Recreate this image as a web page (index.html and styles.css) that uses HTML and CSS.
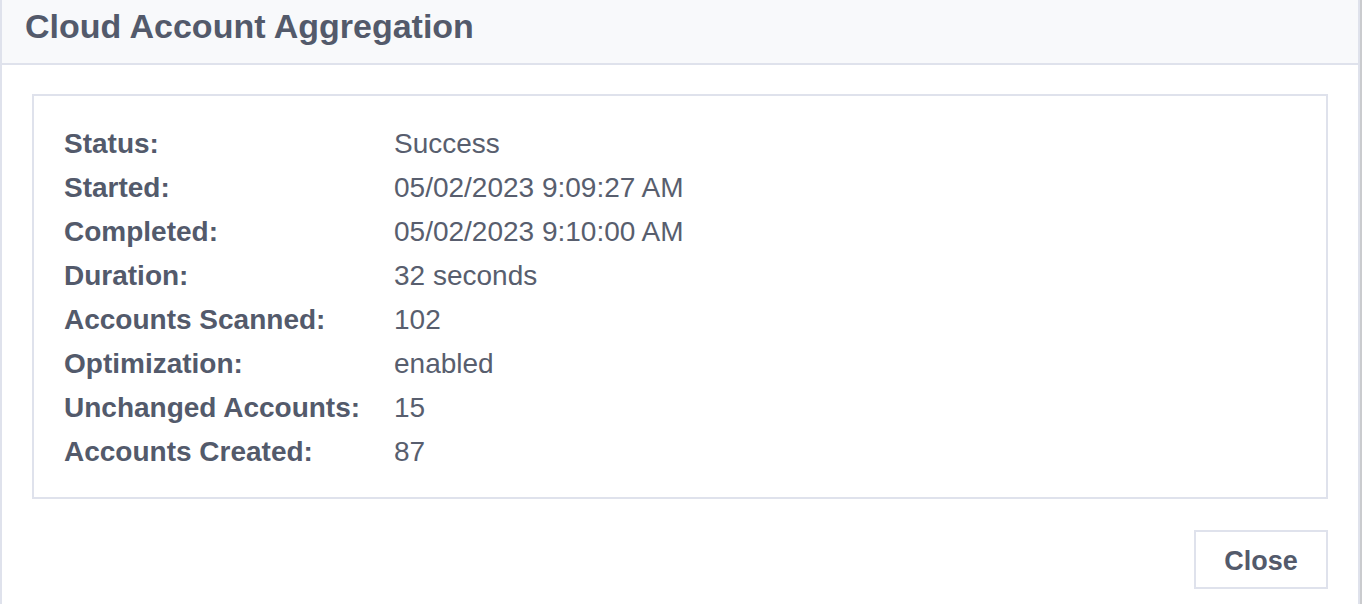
FILE: index.html
```html
<!DOCTYPE html>
<html>
<head>
<meta charset="utf-8">
<link rel="stylesheet" href="styles.css">
</head>
<body>
<div class="frame">
  <div class="modal">
    <div class="modal-header">
      <h1 class="modal-title">Cloud Account Aggregation</h1>
    </div>
    <div class="modal-body">
      <div class="details">
        <div class="label">Status:</div><div class="value">Success</div>
        <div class="label">Started:</div><div class="value">05/02/2023 9:09:27 AM</div>
        <div class="label">Completed:</div><div class="value">05/02/2023 9:10:00 AM</div>
        <div class="label">Duration:</div><div class="value">32 seconds</div>
        <div class="label">Accounts Scanned:</div><div class="value">102</div>
        <div class="label">Optimization:</div><div class="value">enabled</div>
        <div class="label">Unchanged Accounts:</div><div class="value">15</div>
        <div class="label">Accounts Created:</div><div class="value">87</div>
      </div>
      <div class="footer">
        <button class="btn">Close</button>
      </div>
    </div>
  </div>
</div>
</body>
</html>
```

FILE: styles.css
```css
html, body {
  margin: 0;
  padding: 0;
  background: #ffffff;
}

body {
  font-family: "Liberation Sans", Arial, Helvetica, sans-serif;
  color: #535a6b;
}

.frame {
  height: 604px;
  border-right: 2px solid #cacbce;
  box-sizing: border-box;
}

.modal {
  height: 100%;
  box-sizing: border-box;
  border-left: 2px solid #dfe2ec;
  border-right: 2px solid #dfe2ec;
  background: #ffffff;
}

.modal-header {
  background: #f8f9fb;
  border-bottom: 2px solid #dfe2ec;
  padding: 6px 0 0 23px;
  height: 57px;
}

.modal-title {
  margin: 0;
  font-size: 34px;
  line-height: 40px;
  font-weight: 700;
  color: #535a6b;
}

.modal-body {
  padding: 29px 30px 0 30px;
}

.details {
  border: 2px solid #dfe2ec;
  padding: 26px 30px 23px 30px;
  display: grid;
  grid-template-columns: 330px 1fr;
  font-size: 28px;
  line-height: 44px;
}

.label {
  font-weight: 700;
  color: #535a6b;
}

.value {
  color: #585e6e;
}

.footer {
  display: flex;
  justify-content: flex-end;
  padding-top: 31px;
}

.btn {
  box-sizing: border-box;
  width: 134px;
  height: 59px;
  border: 2px solid #dfe2ec;
  background: #ffffff;
  font-family: "Liberation Sans", Arial, Helvetica, sans-serif;
  font-size: 27px;
  font-weight: 700;
  color: #535a6b;
  padding: 3px 0 0 0;
  border-radius: 0;
}
```
